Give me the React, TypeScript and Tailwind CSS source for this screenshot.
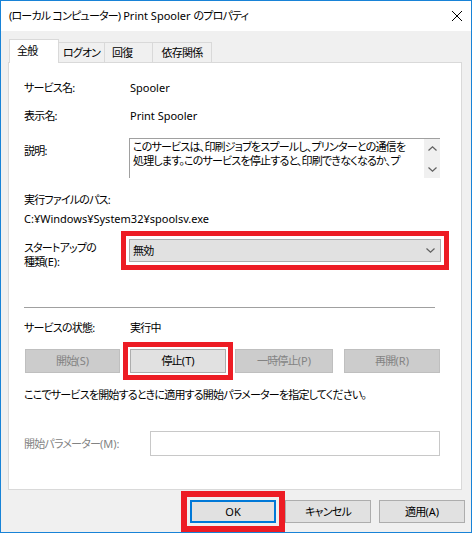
import React from 'react';

const font = "font-['Noto_Sans','Noto_Sans_CJK_JP',sans-serif] [font-feature-settings:'palt']";

// latin runs keep normal spacing; the CJK text around them is tightened
const L: React.FC<{ children: React.ReactNode }> = ({ children }) => (
    <span className="tracking-normal">{children}</span>
);

const Chevron: React.FC<{ up?: boolean; className?: string }> = ({ up, className }) => (
    <svg width="9" height="5" viewBox="0 0 9 5" className={className}>
        <path d={up ? 'M0.5 4.5 L4.5 0.8 L8.5 4.5' : 'M0.5 0.5 L4.5 4.2 L8.5 0.5'} fill="none" stroke="#606060" strokeWidth="1.2" />
    </svg>
);

const Btn: React.FC<{ label: string; hotkey: string; w: string; disabled?: boolean; extra?: string }> = ({ label, hotkey, w, disabled, extra }) => (
    <div
        className={`${w} h-[24px] flex items-center justify-center border ${
            disabled ? 'bg-[#cccccc] border-[#bfbfbf] text-[#838383]' : 'bg-[#e1e1e1] border-[#adadad] text-black'
        } ${extra ?? ''}`}
    >
        {label}
        <L>({hotkey})</L>
    </div>
);

const App: React.FC = () => {
    return (
        <div className={`w-[472px] h-[533px] border border-[#1883d7] bg-[#f0f0f0] flex flex-col text-black text-[11px] leading-[16px] tracking-[-0.8px] ${font}`}>
            {/* title bar */}
            <div className="h-[30px] bg-white flex items-center justify-between pl-[8px]">
                <span>
                    (ローカル コンピューター)<L> Print Spooler </L>のプロパティ
                </span>
                <svg width="10" height="10" viewBox="0 0 10 10" className="mr-[9px]">
                    <path d="M0 0 L10 10 M10 0 L0 10" stroke="#000" strokeWidth="1" />
                </svg>
            </div>

            <div className="flex-1 flex flex-col pl-[7px] pr-[9px] pt-[8px]">
                {/* tabs */}
                <div className="flex items-end pl-[1px] h-[23px]">
                    <div className="relative z-10 w-[50px] h-[24px] -mb-[1px] bg-white border border-b-0 border-[#d9d9d9] pl-[7px] pt-[3px]">全般</div>
                    <div className="w-[46px] h-[20px] border-t border-r border-[#d9d9d9] flex items-center justify-center">ログオン</div>
                    <div className="w-[48px] h-[20px] border-t border-r border-[#d9d9d9] pl-[7px] flex items-center">回復</div>
                    <div className="w-[59px] h-[20px] border-t border-r border-[#d9d9d9] flex items-center justify-center">依存関係</div>
                </div>

                {/* panel */}
                <div className="w-[454px] h-[428px] bg-white border border-[#d9d9d9] pl-[15px] flex flex-col">
                    <div className="flex mt-[17px]">
                        <div className="w-[106px]">サービス名:</div>
                        <L>Spooler</L>
                    </div>
                    <div className="flex mt-[12px]">
                        <div className="w-[106px]">表示名:</div>
                        <L>Print Spooler</L>
                    </div>
                    <div className="flex mt-[14px]">
                        <div className="w-[105px] pt-[5px]">説明:</div>
                        <div className="w-[311px] h-[40px] border-t border-l border-[#a0a0a0] flex">
                            <div className="flex-1 pl-[3px] pt-[1px] leading-[14px] overflow-hidden whitespace-nowrap">
                                <div>このサービスは、印刷ジョブをスプールし、プリンターとの通信を</div>
                                <div>処理します。このサービスを停止すると、印刷できなくなるか、プ</div>
                            </div>
                            <div className="w-[16px] bg-[#f0f0f0] flex flex-col items-center justify-between pt-[7px] pb-[6px]">
                                <Chevron up />
                                <Chevron />
                            </div>
                        </div>
                    </div>
                    <div className="mt-[14px]">実行ファイルのパス:</div>
                    <div className="mt-[3px]">
                        <L>C:¥Windows¥System32¥spoolsv.exe</L>
                    </div>
                    <div className="flex mt-[12px]">
                        <div className="w-[105px] pt-[2px] leading-[14px]">
                            <div>スタートアップの</div>
                            <div>
                                種類<L>(E):</L>
                            </div>
                        </div>
                        <div className="w-[312px] h-[23px] bg-[#e1e1e1] border border-[#adadad] flex items-center justify-between pl-[3px] outline-[5px] outline-solid outline-offset-[3px] outline-[#ed1c24]">
                            <span>無効</span>
                            <Chevron className="mr-[5px]" />
                        </div>
                    </div>

                    <div className="mt-[38px] w-[411px] h-px bg-[#a0a0a0]" />

                    <div className="flex mt-[12px]">
                        <div className="w-[106px]">サービスの状態:</div>
                        <div>実行中</div>
                    </div>
                    <div className="flex mt-[13px] pl-[1px]">
                        <Btn label="開始" hotkey="S" w="w-[95px]" disabled />
                        <Btn label="停止" hotkey="T" w="w-[96px]" extra="ml-[10px] outline-[5px] outline-solid outline-offset-[2px] outline-[#ed1c24]" />
                        <Btn label="一時停止" hotkey="P" w="w-[98px] ml-[9px]" disabled />
                        <Btn label="再開" hotkey="R" w="w-[96px] ml-[11px]" disabled />
                    </div>
                    <div className="mt-[14px]">ここでサービスを開始するときに適用する開始パラメーターを指定してください。</div>
                    <div className="flex items-center mt-[28px]">
                        <div className="w-[126px] text-[#838383]">
                            開始パラメーター<L>(M):</L>
                        </div>
                        <div className="w-[290px] h-[25px] border border-[#c8c8c8] bg-white" />
                    </div>
                </div>

                {/* dialog buttons */}
                <div className="flex justify-end mt-[10px] -mr-[3px]">
                    <div className="w-[86px] h-[23px] bg-[#e1e1e1] border-2 border-[#0078d7] flex items-center justify-center outline-[6px] outline-solid outline-offset-[3px] outline-[#ed1c24]">
                        <L>OK</L>
                    </div>
                    <div className="w-[86px] h-[23px] ml-[9px] bg-[#e1e1e1] border border-[#adadad] flex items-center justify-center">キャンセル</div>
                    <div className="w-[86px] h-[23px] ml-[8px] bg-[#e1e1e1] border border-[#adadad] flex items-center justify-center">
                        適用<L>(A)</L>
                    </div>
                </div>
            </div>
        </div>
    );
};

export default App;
